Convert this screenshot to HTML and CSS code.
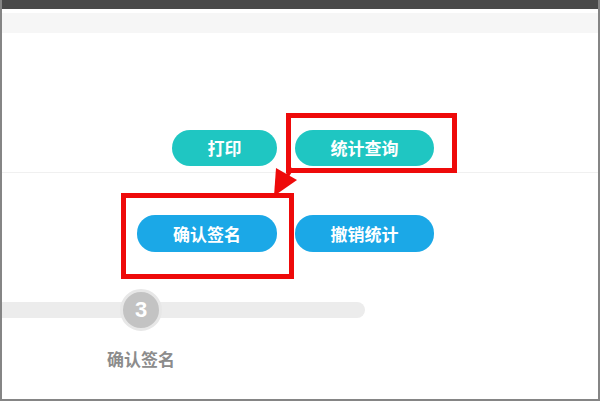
FILE: index.html
```html
<!DOCTYPE html>
<html lang="zh-CN">
<head>
<meta charset="utf-8">
<title>统计查询</title>
<link rel="stylesheet" href="styles.css">
</head>
<body>
<div class="frame">
  <div class="topbar"></div>
  <div class="band"></div>
  <div class="row row-top">
    <button class="btn btn-teal btn-sm">打印</button>
    <button class="btn btn-teal btn-lg">统计查询</button>
  </div>
  <div class="sep"></div>
  <div class="row row-bottom">
    <button class="btn btn-blue btn-md">确认签名</button>
    <button class="btn btn-blue btn-lg">撤销统计</button>
  </div>
  <div class="progress">
    <div class="track"></div>
    <div class="step">
      <div class="node">3</div>
      <div class="step-label">确认签名</div>
    </div>
  </div>

  <div class="mark mark-1"></div>
  <div class="mark mark-2"></div>
  <svg class="arrow" width="40" height="40" viewBox="265 162 40 40">
    <line x1="292" y1="168" x2="284" y2="181" stroke="#ee0a0a" stroke-width="4"/>
    <polygon points="276,168 297,180 274,196" fill="#ee0a0a"/>
  </svg>
</div>
</body>
</html>
```

FILE: styles.css
```css
* { box-sizing: border-box; }
html, body { margin: 0; padding: 0; background: #fff; }
body { font-family: "Noto Sans CJK SC", "Noto Sans", sans-serif; }

.frame {
  position: relative;
  width: 600px;
  height: 401px;
  border-left: 2px solid #858585;
  border-right: 2px solid #858585;
  border-bottom: 2px solid #858585;
  overflow: hidden;
}

.topbar { height: 9px; background: #4a4a4a; }
.band { height: 20px; margin-top: 4px; background: #f6f6f6; }

.row { display: flex; gap: 18px; }
.row-top { margin-top: 97px; padding-left: 170px; }
.row-bottom { margin-top: 42px; padding-left: 135px; }

.btn {
  height: 36px;
  border: none;
  border-radius: 18px;
  color: #fff;
  font-family: "Noto Sans CJK SC", sans-serif;
  font-weight: 700;
  font-size: 17px;
  line-height: 36px;
  padding: 0;
  text-align: center;
}
.btn-teal { background: #1fc6c2; }
.btn-blue { background: #1ba8e7; height: 37px; }
.btn-sm { width: 105px; }
.btn-md { width: 140px; }
.btn-lg { width: 139px; }

.sep { height: 1px; margin-top: 6px; background: #f0f0f0; }

.progress {
  display: grid;
  width: 363px;
  margin-top: 37px;
}
.track {
  grid-area: 1 / 1;
  align-self: start;
  margin-top: 13px;
  height: 16px;
  background: #ececec;
  border-radius: 0 8px 8px 0;
}
.step {
  grid-area: 1 / 1;
  justify-self: start;
  width: 80px;
  margin-left: 99px;
  display: flex;
  flex-direction: column;
  align-items: center;
}
.node {
  width: 42px;
  height: 42px;
  border-radius: 50%;
  background: #c3c3c3;
  border: 3px solid #e7e7e7;
  color: #fff;
  font-family: "Liberation Sans", Arial, sans-serif;
  font-weight: 700;
  font-size: 22px;
  line-height: 36px;
  text-align: center;
}
.step-label {
  margin-top: 17px;
  font-size: 17px;
  line-height: 22px;
  font-weight: 700;
  color: #8c8c8c;
  white-space: nowrap;
}

.mark {
  position: absolute;
  border: 5px solid #ee0a0a;
}
.mark-1 { left: 284px; top: 113px; width: 171px; height: 60px; }
.mark-2 { left: 119px; top: 193px; width: 173px; height: 86px; }
.arrow { position: absolute; left: 263px; top: 162px; }
```
